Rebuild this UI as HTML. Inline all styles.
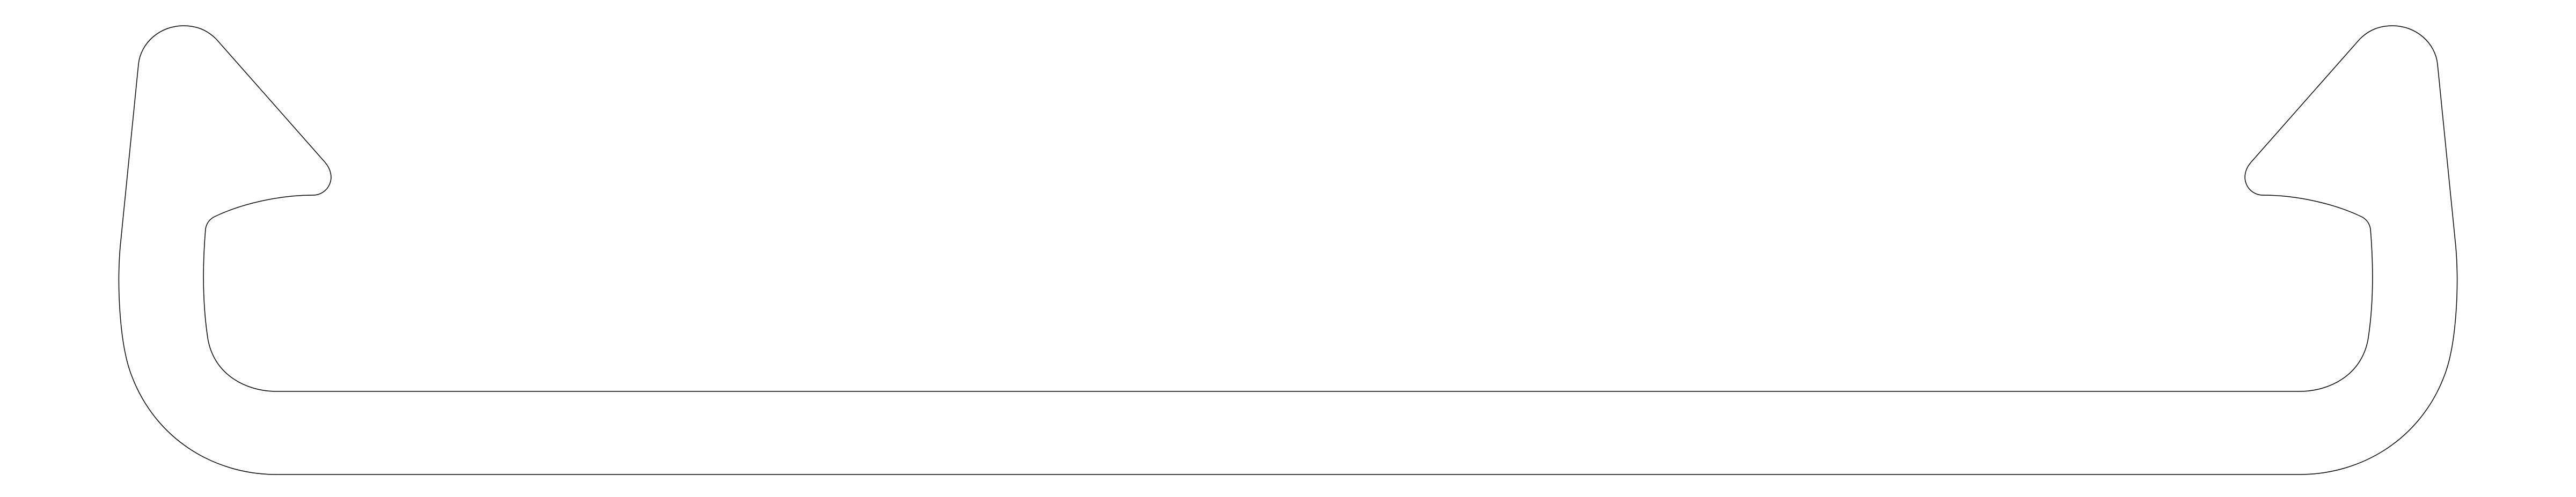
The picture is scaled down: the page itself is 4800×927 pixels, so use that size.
<!DOCTYPE html>
<html><head><meta charset="utf-8"><style>html,body{margin:0;padding:0;background:#fff}svg{display:block}</style></head>
<body>
<svg width="4800" height="927" viewBox="0 0 4800 927" xmlns="http://www.w3.org/2000/svg">
<defs>
<path id="p" d="M515,730 C460,730 398,700 387,630 C378,570 377,500 383,427 C385,415 392,408 400,404 C450,380 520,364 583,364 C612,364 630,330 605,302 L403,73 C385,55 365,48 342,48 C298,48 262,80 258,120 L224,460 C218,530 222,640 245,700 C290,820 400,885 515,885"/>
</defs>
<g fill="none" stroke="#000" stroke-width="1.5">
<use href="#p"/>
<use href="#p" transform="translate(4800,0) scale(-1,1)"/>
<line x1="515" y1="730" x2="4285" y2="730"/>
<line x1="515" y1="885" x2="4285" y2="885"/>
</g>
</svg>
</body></html>
